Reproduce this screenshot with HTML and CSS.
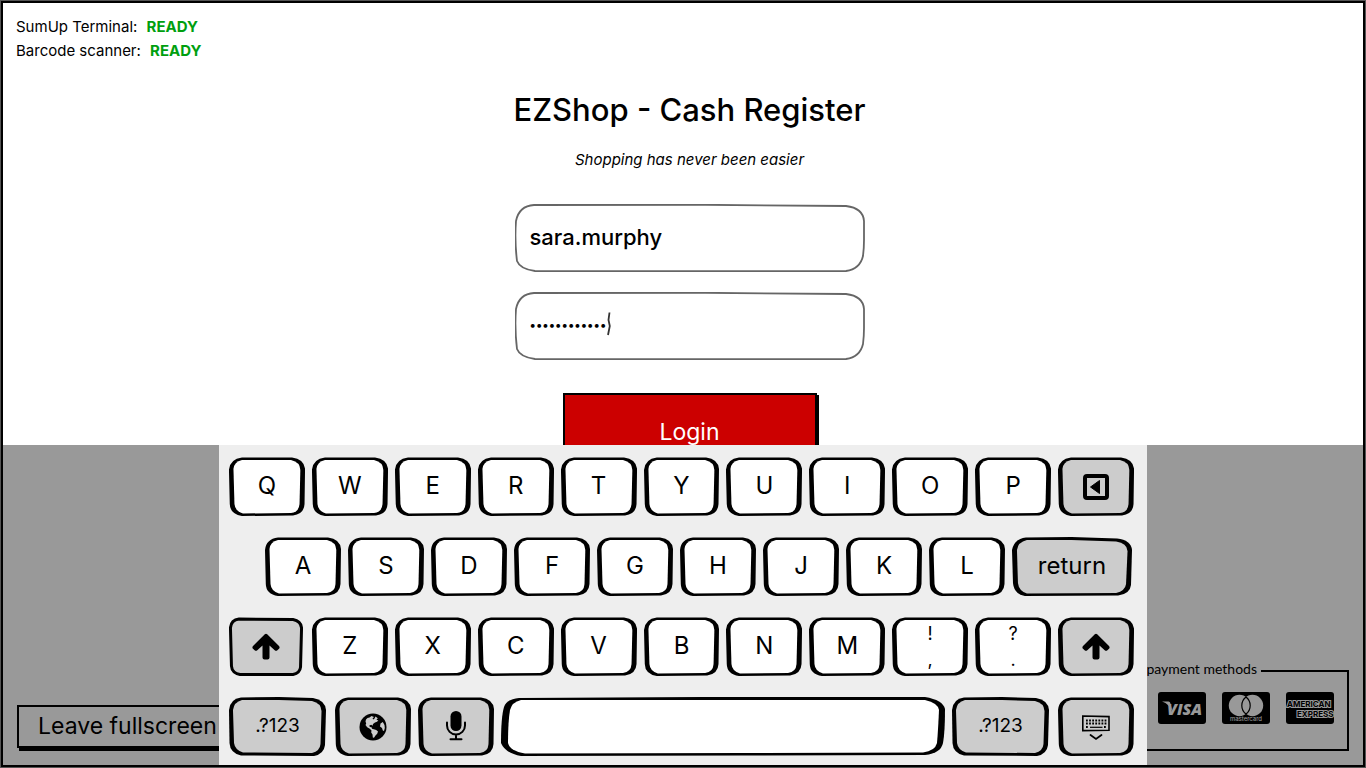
FILE: index.html
```html
<!DOCTYPE html>
<html lang="en">
<head>
<meta charset="utf-8">
<title>EZShop - Cash Register</title>
<link rel="stylesheet" href="styles.css">
</head>
<body>
<div class="screen">
  <header class="status">
    <p>SumUp Terminal: <strong>READY</strong></p>
    <p>Barcode scanner: <strong>READY</strong></p>
  </header>

  <main class="login">
    <h1>EZShop - Cash Register</h1>
    <p class="tagline">Shopping has never been easier</p>
    <form class="login-form">
      <input class="field" type="text" aria-label="Username" value="sara.murphy">
      <input class="field field-password" type="password" aria-label="Password" value="abcdefghijkl">
      <button class="login-button" type="button">Login</button>
    </form>
  </main>

  <footer class="footer">
    <button class="leave-button" type="button">Leave fullscreen</button>
    <fieldset class="payments">
      <legend>Accepted payment methods</legend>
      <svg class="card" viewBox="0 0 48 32" role="img" aria-label="Visa">
        <rect width="48" height="32" rx="3"/>
        <text class="visa" x="9" y="23">VISA</text>
        <path class="logo-fill" d="M4 9.500h6.500q1.500 0 1.800 1.500L14.500 20q-3-8-10.500-10.500z"/>
      </svg>
      <svg class="card" viewBox="0 0 48 32" role="img" aria-label="Mastercard">
        <rect width="48" height="32" rx="3"/>
        <circle class="logo-fill" cx="17.500" cy="13.500" r="10.700"/>
        <circle class="logo-fill" cx="30.500" cy="13.500" r="10.700"/>
        <path class="lens" d="M24 5a10.700 10.700 0 0 1 0 17a10.700 10.700 0 0 1 0-17z"/>
        <text class="mastercard" x="24" y="29">mastercard</text>
      </svg>
      <svg class="card" viewBox="0 0 48 32" role="img" aria-label="American Express">
        <rect width="48" height="32" rx="3"/>
        <text class="amex" x="1" y="15">AMERICAN</text>
        <text class="amex" x="11" y="25">EXPRESS</text>
      </svg>
    </fieldset>
  </footer>

  <div class="overlay">
    <div class="keyboard">
      <div class="row">
        <button class="key">Q</button><button class="key">W</button><button class="key">E</button><button class="key">R</button><button class="key">T</button><button class="key">Y</button><button class="key">U</button><button class="key">I</button><button class="key">O</button><button class="key">P</button>
        <button class="key dark" aria-label="Backspace">
          <svg class="icon" viewBox="0 0 28 28"><rect x="3" y="3" width="22" height="22" rx="2" fill="none" stroke="#000" stroke-width="4"/><path d="M8.500 14L17.500 7.500V20.500z" stroke="#000" stroke-linejoin="round"/></svg>
        </button>
      </div>
      <div class="row row-home">
        <button class="key">A</button><button class="key">S</button><button class="key">D</button><button class="key">F</button><button class="key">G</button><button class="key">H</button><button class="key">J</button><button class="key">K</button><button class="key">L</button>
        <button class="key dark wide">return</button>
      </div>
      <div class="row">
        <button class="key dark shift" aria-label="Shift">
          <svg class="icon" viewBox="0 0 28 28"><path d="M12.800 1.200q1.200-1 2.400 0L27 13q1.200 1.400 0 2.700l-1.600 1.600q-1.400 1-2.700 0L17.500 12.500V24.500q0 2-2 2h-3q-2 0-2-2V12.500L5.300 17.300q-1.300 1-2.700 0L1 15.700q-1.200-1.300 0-2.700z"/></svg>
        </button>
        <button class="key">Z</button><button class="key">X</button><button class="key">C</button><button class="key">V</button><button class="key">B</button><button class="key">N</button><button class="key">M</button>
        <button class="key pair"><span>!</span><span>,</span></button>
        <button class="key pair"><span>?</span><span>.</span></button>
        <button class="key dark" aria-label="Shift">
          <svg class="icon" viewBox="0 0 28 28"><path d="M12.800 1.200q1.200-1 2.400 0L27 13q1.200 1.400 0 2.700l-1.600 1.600q-1.400 1-2.700 0L17.500 12.500V24.500q0 2-2 2h-3q-2 0-2-2V12.500L5.300 17.300q-1.300 1-2.700 0L1 15.700q-1.200-1.300 0-2.700z"/></svg>
        </button>
      </div>
      <div class="row">
        <button class="key dark symbols">.?123</button>
        <button class="key dark" aria-label="Language">
          <svg class="icon" viewBox="0 0 28 28"><circle cx="14" cy="14" r="13.500"/><path class="land" d="M12.500 3L10.500 4.500L8.500 5L7 6.500L6.500 8.500L7.200 10.500L6.500 12L8.200 14.300L10.800 15.800L12.500 17.500L12.200 19.500L13.500 21.500L13.800 24.500L15 24.800L16.500 22.500L18.200 20.800L19 18.500L17.200 17L14.800 16.200L13 15.800L12.600 14.200L10.800 14L10.300 12.500L12.200 11.800L13.600 12.800L14 11L16 9.500L18 8.800L19.300 7.500L17.500 6.800L18.800 5.200L16.500 3.500L15.500 5.500L14.500 6.500L13.500 5.500L15 4z"/><path class="land" d="M21.500 10.500L23.800 9L25.500 12L25.800 15L25 18L23.800 17.500L23 15L21 13.500z"/></svg>
        </button>
        <button class="key dark" aria-label="Dictation">
          <svg class="icon mic" viewBox="0 0 20 30"><rect x="4.500" y="0" width="11" height="20" rx="5.500"/><path d="M1 11.500V14.500a9 9 0 0 0 18 0V11.500M10 23.500V28M4.500 28.300H15.500" fill="none" stroke="#000" stroke-width="2" stroke-linecap="round"/></svg>
        </button>
        <button class="key space" aria-label="Space"></button>
        <button class="key dark symbols">.?123</button>
        <button class="key dark" aria-label="Hide keyboard">
          <svg class="icon" viewBox="0 0 28 28"><path d="M.8 3L27 3.600V17.300L.8 17.600z" fill="none" stroke="#000" stroke-width="1.600"/><path d="M4 7.500H25M4 10.500H25M4 14H6.500M22 14H25" fill="none" stroke="#000" stroke-width="1.800" stroke-dasharray="1.800 1.300"/><path d="M8 14.300H20.500" stroke="#000" stroke-width="1.200"/><path d="M8.500 22L14 26L19.500 22" fill="none" stroke="#000" stroke-width="1.800" stroke-linecap="round"/></svg>
        </button>
      </div>
    </div>
  </div>
</div>
</body>
</html>
```
FILE: styles.css
```css
* { box-sizing: border-box; }

body {
  margin: 0;
  background: #555;
  color: #000;
  font-family: Inter, "Liberation Sans", sans-serif;
}

button, input { font-family: inherit; color: inherit; margin: 0; }
p, h1 { margin: 0; }

.screen {
  position: relative;
  display: flex;
  flex-direction: column;
  min-height: 100vh;
  border: 1px solid #555;
  background: #fff;
  box-shadow: inset 0 0 0 2px #000;
}

.status {
  padding: 14px 15px 0;
  font-size: 15px;
  line-height: 24px;
}
.status strong { margin-left: 5px; color: #009f0f; }

.login {
  flex: 1;
  display: flex;
  flex-direction: column;
  align-items: center;
  padding: 27px 0 0 13px;
}
.login h1 { font-size: 31px; line-height: 40px; font-weight: 500; }
.tagline { margin-top: 20px; font-size: 15px; line-height: 20px; font-style: italic; }

.login-form {
  display: flex;
  flex-direction: column;
  align-items: center;
  gap: 20px;
  margin-top: 34px;
}
.field {
  width: 350px;
  height: 68px;
  padding: 0 15px 3px;
  border: 0;
  outline: 0;
  font-size: 22px;
  font-weight: 500;
  background: url("data:image/svg+xml,%3Csvg xmlns='http://www.w3.org/2000/svg' viewBox='0 0 350 68' preserveAspectRatio='none'%3E%3Cpath d='M19 1L190 .8L331 2Q348 4 349 17L349 36Q349 44 348 52Q345 65 331 67L180 67.200L20 67Q5 65 2 57Q-.5 36 1 17Q4 2 19 1Z' fill='none' stroke='%23666' stroke-width='1.800'/%3E%3C/svg%3E") center / 100% 100% no-repeat;
}
.field-password {
  font-size: 12px;
  background:
    url("data:image/svg+xml,%3Csvg xmlns='http://www.w3.org/2000/svg' viewBox='0 0 4 24'%3E%3Cpath d='M2.500 .5L1.500 8L2.800 14L1 23' fill='none' stroke='%23333' stroke-width='1.800'/%3E%3C/svg%3E") 92px 20px / 4px 24px no-repeat,
    url("data:image/svg+xml,%3Csvg xmlns='http://www.w3.org/2000/svg' viewBox='0 0 350 68' preserveAspectRatio='none'%3E%3Cpath d='M19 1L190 .8L331 2Q348 4 349 17L349 36Q349 44 348 52Q345 65 331 67L180 67.200L20 67Q5 65 2 57Q-.5 36 1 17Q4 2 19 1Z' fill='none' stroke='%23666' stroke-width='1.800'/%3E%3C/svg%3E") center / 100% 100% no-repeat;
}
.login-button {
  width: 254px;
  height: 78px;
  margin-top: 13px;
  border: 2px solid #000;
  background: #c00;
  box-shadow: 1px 2px 0 1px #000;
  box-shadow: 2px 2px 0 #000;
  color: #fff;
  font-size: 23px;
}

.footer {
  display: flex;
  justify-content: space-between;
  align-items: flex-end;
  padding: 0 16px 16px;
}
.leave-button {
  padding: 0 19px;
  margin-bottom: 3px;
  border: 2px solid #000;
  background: #fff;
  box-shadow: 2px 3px 0 #000;
  font-size: 23px;
  line-height: 39px;
}

.payments {
  display: flex;
  gap: 16px;
  min-width: 300px;
  justify-content: flex-end;
  margin: 0;
  padding: 11px 13px 25px;
  border: 2px solid #000;
}
.payments legend {
  margin-left: auto;
  margin-right: 73px;
  padding: 0 4px 4px;
  font: 14px/16px Lato, sans-serif;
}
.card { width: 48px; height: 32px; }
.logo-fill { fill: #fff; }
.lens { fill: #fff; stroke: #000; stroke-width: 1.2; }
.visa { fill: #fff; font: italic 800 16px "Open Sans", sans-serif; }
.mastercard { fill: #fff; font: 6px Inter, sans-serif; text-anchor: middle; }
.amex {
  fill: #000;
  stroke: #fff;
  stroke-width: 2;
  paint-order: stroke;
  font: 700 8px Inter, sans-serif;
}

.overlay {
  position: absolute;
  left: 2px;
  right: 2px;
  bottom: 2px;
  display: flex;
  justify-content: center;
  background: rgba(0, 0, 0, 0.4);
}
.keyboard {
  display: flex;
  flex-direction: column;
  gap: 21px;
  width: 928px;
  padding: 12px 13px 9px 10px;
  background: #eee;
}
.row { display: flex; gap: 7px; }
.row-home { padding: 0 2px 0 36px; }

.key {
  display: flex;
  align-items: center;
  justify-content: center;
  flex: 0 1 76px;
  height: 59px;
  padding: 0 0 2px;
  border: 0;
  font-size: 24px;
  background: url("data:image/svg+xml,%3Csvg xmlns='http://www.w3.org/2000/svg' viewBox='0 0 76 59' preserveAspectRatio='none'%3E%3Cpath d='M13 .5L63 .5Q75 2 76 12L75.500 47Q75 57 64 58.500L13 59Q1 57 .8 47L0 13Q1 2 13 .5Z'/%3E%3Cpath fill='%23fff' d='M13 3L62 3Q71 5 71.300 13L70.500 47Q70 55 62 56L14 56.500Q6 54 5.500 47L4.500 12Q5 5 13 3Z'/%3E%3C/svg%3E") center / 100% 100% no-repeat;
}
.dark {
  background-image: url("data:image/svg+xml,%3Csvg xmlns='http://www.w3.org/2000/svg' viewBox='0 0 76 59' preserveAspectRatio='none'%3E%3Cpath d='M13 .5L63 .5Q75 2 76 12L75.500 47Q75 57 64 58.500L13 59Q1 57 .8 47L0 13Q1 2 13 .5Z'/%3E%3Cpath fill='%23ccc' d='M13 3L62 3Q71 5 71.300 13L70.500 47Q70 55 62 56L14 56.500Q6 54 5.500 47L4.500 12Q5 5 13 3Z'/%3E%3C/svg%3E");
}
.wide {
  flex: 1;
  background-image: url("data:image/svg+xml,%3Csvg xmlns='http://www.w3.org/2000/svg' viewBox='0 0 121 59' preserveAspectRatio='none'%3E%3Cpath d='M14 .5L60 0L106 1.500Q120 3 121 13L120 48Q119 57 107 58.500L13 59Q2 57 1 46L0 13Q2 2 14 .5Z'/%3E%3Cpath fill='%23ccc' d='M15 3L60 3L105 4.500Q116 6 116.500 14L115 47Q114 54 105 56L15 56.500Q7 54 6 46L5 13Q6 5 15 3Z'/%3E%3C/svg%3E");
}
.shift {
  flex-basis: 74px;
  margin-right: 2px;
  background-image: url("data:image/svg+xml,%3Csvg xmlns='http://www.w3.org/2000/svg' viewBox='0 0 74 59' preserveAspectRatio='none'%3E%3Cpath fill='%23ccc' stroke='%23000' stroke-width='3' d='M10 2L64 2.500Q72 4 72.500 11L71.500 50Q71 56 64 57.500L11 57.500Q3 56 2.500 49L1.500 11Q2 3 10 2Z'/%3E%3C/svg%3E");
}
.symbols {
  flex-basis: 97px;
  margin-right: 2px;
  font-size: 19px;
  background-image: url("data:image/svg+xml,%3Csvg xmlns='http://www.w3.org/2000/svg' viewBox='0 0 97 59' preserveAspectRatio='none'%3E%3Cpath d='M12 .5L50 0L84 1Q96 3 97 13L96 48Q95 57 85 59L12 58.500Q1 56 .5 46L0 13Q1 2 12 .5Z'/%3E%3Cpath fill='%23ccc' d='M13 3L50 3L83 4Q92 6 92.500 14L91.500 47Q91 54 83 56L14 55.500Q6 53 5 46L4 13Q5 5 13 3Z'/%3E%3C/svg%3E");
}
.space {
  flex: 1;
  background-image: url("data:image/svg+xml,%3Csvg xmlns='http://www.w3.org/2000/svg' viewBox='0 0 444 59' preserveAspectRatio='none'%3E%3Cpath d='M18 1L200 0L424 0Q442 3 444 12Q444 35 442 46Q440 56 424 58L240 58.500L20 59Q4 56 0 46Q0 20 3 10Q6 2 18 1Z'/%3E%3Cpath fill='%23fff' d='M20 3L424 3Q437 6 438 13Q437 35 436 46Q434 54 422 55.500L240 56L24 56.500Q9 54 7 46Q7 25 9 13Q11 5 20 3Z'/%3E%3C/svg%3E");
}
.pair {
  flex-direction: column;
  justify-content: space-between;
  padding: 5px 0 4px;
  font-size: 18px;
  line-height: 24px;
}
.icon { width: 28px; height: 28px; margin-top: 2px; }
.mic { width: 20px; height: 30px; margin-top: 0; }
.land { fill: #ccc; }
```
